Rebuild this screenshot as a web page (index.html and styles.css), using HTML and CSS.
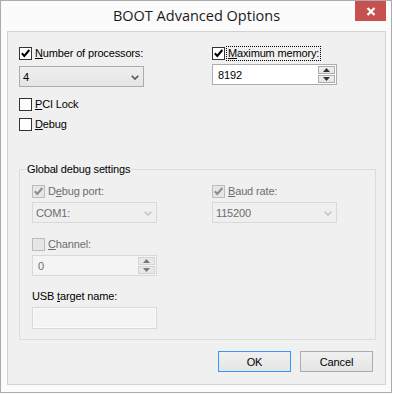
FILE: index.html
```html
<!DOCTYPE html>
<html>
<head>
<meta charset="utf-8">
<link rel="stylesheet" href="styles.css">
</head>
<body>
<div class="window">
  <div class="titlebar">
    <span class="title">BOOT Advanced Options</span>
    <span class="close"><svg width="10" height="9" viewBox="0 0 10 9"><path d="M1.5 1 L8.5 8 M8.5 1 L1.5 8" stroke="#fff" stroke-width="2.2" fill="none"/></svg></span>
  </div>
  <div class="client">
    <div class="top">
      <div class="col">
        <label class="check"><span class="box"><svg width="11" height="11" viewBox="0 0 11 11"><path d="M1.8 5.3 L4.3 8 L9.3 2" stroke="#000" stroke-width="2" fill="none"/></svg></span><span class="lbl"><u>N</u>umber of processors:</span></label>
        <div class="combo"><span>4</span><svg class="chev" width="8" height="5" viewBox="0 0 8 5"><path d="M0.7 0.7 L4 4 L7.3 0.7" stroke="#555" stroke-width="1.6" fill="none"/></svg></div>
        <label class="check pci"><span class="box"></span><span class="lbl"><u>P</u>CI Lock</span></label>
        <label class="check dbg"><span class="box"></span><span class="lbl"><u>D</u>ebug</span></label>
      </div>
      <div class="col">
        <label class="check"><span class="box"><svg width="11" height="11" viewBox="0 0 11 11"><path d="M1.8 5.3 L4.3 8 L9.3 2" stroke="#000" stroke-width="2" fill="none"/></svg></span><span class="lbl focus"><u>M</u>aximum memory:</span></label>
        <div class="edit mem"><span class="val">8192</span><span class="spin"><span class="sb"><svg width="7" height="4" viewBox="0 0 7 4"><path d="M0 4 L3.5 0 L7 4Z" fill="#333"/></svg></span><span class="sb"><svg width="7" height="4" viewBox="0 0 7 4"><path d="M0 0 L3.5 4 L7 0Z" fill="#333"/></svg></span></span></div>
      </div>
    </div>
    <div class="group">
      <div class="legend">Global debug settings</div>
      <div class="ggrid">
        <div class="col">
          <label class="check dis"><span class="box"><svg width="11" height="11" viewBox="0 0 11 11"><path d="M1.8 5.3 L4.3 8 L9.3 2" stroke="#8c8c8c" stroke-width="2" fill="none"/></svg></span><span class="lbl">D<u>e</u>bug port:</span></label>
          <div class="combo dis"><span>COM1:</span><svg class="chev" width="8" height="5" viewBox="0 0 8 5"><path d="M0.7 0.7 L4 4 L7.3 0.7" stroke="#c4c4c4" stroke-width="1.6" fill="none"/></svg></div>
          <label class="check dis chan"><span class="box"></span><span class="lbl"><u>C</u>hannel:</span></label>
          <div class="edit dis"><span class="val">0</span><span class="spin"><span class="sb"><svg width="7" height="4" viewBox="0 0 7 4"><path d="M0 4 L3.5 0 L7 4Z" fill="#777"/></svg></span><span class="sb"><svg width="7" height="4" viewBox="0 0 7 4"><path d="M0 0 L3.5 4 L7 0Z" fill="#777"/></svg></span></span></div>
          <div class="usb">USB <u>t</u>arget name:</div>
          <div class="edit dis usbedit"></div>
        </div>
        <div class="col">
          <label class="check dis"><span class="box"><svg width="11" height="11" viewBox="0 0 11 11"><path d="M1.8 5.3 L4.3 8 L9.3 2" stroke="#8c8c8c" stroke-width="2" fill="none"/></svg></span><span class="lbl"><u>B</u>aud rate:</span></label>
          <div class="combo dis"><span>115200</span><svg class="chev" width="8" height="5" viewBox="0 0 8 5"><path d="M0.7 0.7 L4 4 L7.3 0.7" stroke="#c4c4c4" stroke-width="1.6" fill="none"/></svg></div>
        </div>
      </div>
    </div>
    <div class="buttons">
      <span class="btn default">OK</span>
      <span class="btn">Cancel</span>
    </div>
  </div>
</div>
</body>
</html>
```

FILE: styles.css
```css
* { box-sizing: border-box; }
body {
  margin: 0;
  background: #fff;
  font-family: "Liberation Sans", Arial, sans-serif;
  font-size: 11px;
  letter-spacing: -0.15px;
  color: #000;
}
u { text-decoration: underline; text-underline-offset: 1px; }
.window {
  width: 392px;
  height: 393px;
  border: 1px solid #ababab;
  background: #fbfbfb;
  display: flex;
  flex-direction: column;
  padding: 0 5px 7px 6px;
}
.titlebar {
  height: 30px;
  display: grid;
  flex: none;
}
.title {
  grid-area: 1 / 1;
  justify-self: center;
  font-family: "Open Sans", "Noto Sans", sans-serif;
  font-size: 14.5px;
  letter-spacing: 0;
  line-height: 30px;
  color: #1a1a1a;
}
.close {
  grid-area: 1 / 1;
  justify-self: end;
  width: 31px;
  height: 20px;
  background: #c75050;
  display: flex;
  align-items: center;
  justify-content: center;
}
.client {
  flex: 1;
  border: 1px solid #d2d2d2;
  background: #f0f0f0;
  display: flex;
  flex-direction: column;
}
.top {
  display: grid;
  grid-template-columns: 125px 125px;
  column-gap: 68px;
  padding: 15px 0 0 11px;
}
.col { display: flex; flex-direction: column; align-items: flex-start; }
.check {
  display: flex;
  align-items: center;
  height: 13px;
  gap: 3px;
  white-space: nowrap;
}
.box {
  width: 13px;
  height: 13px;
  border: 1px solid #333;
  background: #fff;
  display: flex;
  align-items: center;
  justify-content: center;
  flex: none;
}
.lbl { line-height: 13px; }
.focus { outline: 1px dotted #000; outline-offset: 0; padding: 0 1px; margin-left: -1px; }
.combo {
  width: 125px;
  height: 21px;
  margin-top: 6px;
  border: 1px solid #acacac;
  background: linear-gradient(#efefef, #e5e5e5);
  display: flex;
  align-items: center;
  justify-content: space-between;
  padding: 0 4px 0 3px;
}
.chev { margin-top: 1px; }
.pci { margin-top: 11px; }
.dbg { margin-top: 7px; }
.edit {
  width: 125px;
  height: 21px;
  border: 1px solid #abadb3;
  background: #fff;
  display: flex;
  align-items: stretch;
}
.edit.mem { margin-top: 4px; }
.val { flex: 1; display: flex; align-items: center; padding-left: 5px; }
.spin {
  width: 18px;
  display: flex;
  flex-direction: column;
  padding: 1px 1px 1px 0;
  gap: 1px;
}
.sb {
  flex: 1;
  border: 1px solid #acacac;
  background: linear-gradient(#f0f0f0, #e5e5e5);
  display: flex;
  align-items: center;
  justify-content: center;
}
.group {
  margin: 38px 9px 0 11px;
  height: 171px;
  border: 1px solid #dcdcdc;
  flex: none;
}
.legend {
  width: fit-content;
  margin: -7px 0 0 6px;
  padding: 0 1px;
  line-height: 13px;
  background: #f0f0f0;
}
.ggrid {
  display: grid;
  grid-template-columns: 125px 125px;
  column-gap: 55px;
  padding: 9px 0 0 12px;
}
.check.dis .box { border-color: #bcbcbc; background: #e6e6e6; }
.check.dis .lbl { color: #6d6d6d; }
.combo.dis {
  margin-top: 4px;
  border-color: #d9d9d9;
  background: #efefef;
  color: #6d6d6d;
}
.chan { margin-top: 15px; }
.edit.dis {
  margin-top: 4px;
  border-color: #d9d9d9;
  background: #f4f4f4;
  color: #6d6d6d;
}
.edit.dis .sb { border-color: #d4d4d4; background: #e8e8e8; }
.usb { margin-top: 14px; line-height: 13px; }
.usbedit { height: 22px; background: #f0f0f0; box-shadow: inset 0 0 0 1px #fafafa; }
.buttons {
  display: flex;
  justify-content: flex-end;
  gap: 9px;
  margin-top: 11px;
  padding-right: 12px;
}
.btn {
  width: 73px;
  height: 21px;
  border: 1px solid #acacac;
  background: linear-gradient(#f0f0f0, #e5e5e5);
  display: flex;
  align-items: center;
  justify-content: center;
}
.btn.default { border-color: #3399ff; }
```
